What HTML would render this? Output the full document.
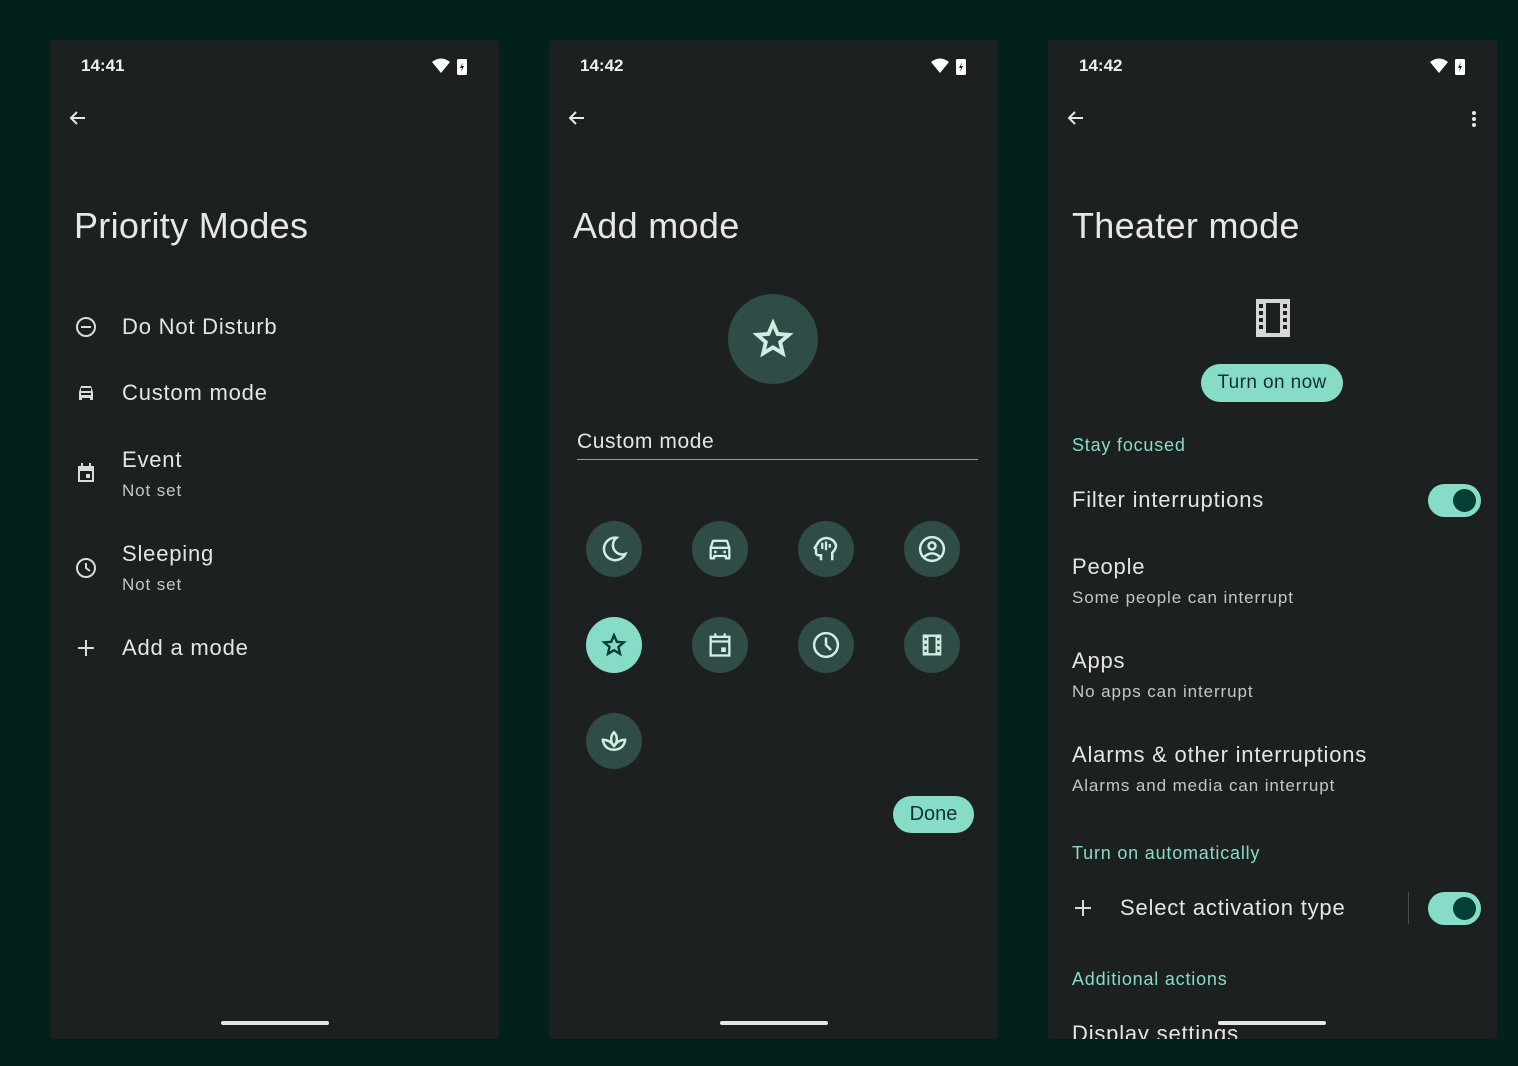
<!DOCTYPE html>
<html><head><meta charset="utf-8"><style>
*{margin:0;padding:0;box-sizing:border-box}
body{width:1518px;height:1066px;background:#02211d;position:relative;overflow:hidden;font-family:"Liberation Sans",sans-serif;color:#e3e6e4}
.p{position:absolute;top:40px;width:449px;height:999px;background:#1d2020;border-radius:3px;overflow:hidden}
.t{position:absolute;white-space:nowrap}
.time{font-size:17px;font-weight:bold;line-height:20px;top:56px;color:#eee}
.h{font-size:36px;line-height:40px;top:206px;color:#e6e8e6;letter-spacing:0.3px}
.i{font-size:22px;line-height:26px;letter-spacing:0.8px}
.s{font-size:17px;line-height:20px;color:#c2c6c4;letter-spacing:0.9px}
.a{font-size:18px;line-height:22px;color:#86dcc7;letter-spacing:0.8px}
.nav{position:absolute;top:1021px;width:108px;height:4px;border-radius:2px;background:#e6e6e6}
.c{position:absolute;width:56px;height:56px;border-radius:50%;background:#2f4c46;display:flex;align-items:center;justify-content:center}
.tg{position:absolute;width:53px;height:33px;border-radius:17px;background:#86dcc7}
.tg::after{content:"";position:absolute;right:5px;top:5px;width:23px;height:23px;border-radius:50%;background:#053f35}
svg{position:absolute}
</style></head><body>
<div class="p" style="left:50px"></div>
<div class="p" style="left:549px"></div>
<div class="p" style="left:1048px"></div>

<div class="t time" style="left:81px">14:41</div>
<div class="t time" style="left:580px">14:42</div>
<div class="t time" style="left:1079px">14:42</div>
<svg style="left:431px;top:57px" width="40" height="18" viewBox="0 0 40 18"><path d="M1 5 Q10 -2 19 5 L10 16Z" fill="#fff"/><rect x="26" y="2" width="10" height="16" rx="1.5" fill="#fff"/><path d="M32 5 L29 11 H31 L30 15 L33 9 H31Z" fill="#1d2020"/></svg>
<svg style="left:930px;top:57px" width="40" height="18" viewBox="0 0 40 18"><path d="M1 5 Q10 -2 19 5 L10 16Z" fill="#fff"/><rect x="26" y="2" width="10" height="16" rx="1.5" fill="#fff"/><path d="M32 5 L29 11 H31 L30 15 L33 9 H31Z" fill="#1d2020"/></svg>
<svg style="left:1429px;top:57px" width="40" height="18" viewBox="0 0 40 18"><path d="M1 5 Q10 -2 19 5 L10 16Z" fill="#fff"/><rect x="26" y="2" width="10" height="16" rx="1.5" fill="#fff"/><path d="M32 5 L29 11 H31 L30 15 L33 9 H31Z" fill="#1d2020"/></svg>

<svg style="left:68px;top:108px" width="20" height="20" viewBox="0 0 20 20"><path d="M17 10H3M9 4L3 10L9 16" stroke="#e6e6e6" stroke-width="2" fill="none"/></svg>
<svg style="left:567px;top:108px" width="20" height="20" viewBox="0 0 20 20"><path d="M17 10H3M9 4L3 10L9 16" stroke="#e6e6e6" stroke-width="2" fill="none"/></svg>
<svg style="left:1066px;top:108px" width="20" height="20" viewBox="0 0 20 20"><path d="M17 10H3M9 4L3 10L9 16" stroke="#e6e6e6" stroke-width="2" fill="none"/></svg>
<svg style="left:1470px;top:110px" width="8" height="18" viewBox="0 0 8 18"><circle cx="4" cy="3" r="2" fill="#e6e6e6"/><circle cx="4" cy="9" r="2" fill="#e6e6e6"/><circle cx="4" cy="15" r="2" fill="#e6e6e6"/></svg>

<!-- Panel 1 -->
<div class="t h" style="left:74px">Priority Modes</div>
<svg style="left:75px;top:316px" width="22" height="22" viewBox="0 0 22 22"><circle cx="11" cy="11" r="9" stroke="#d8dcda" stroke-width="2" fill="none"/><path d="M6 11H16" stroke="#d8dcda" stroke-width="2"/></svg>
<div class="t i" style="left:122px;top:314px">Do Not Disturb</div>
<svg style="left:76px;top:384px" width="20" height="18" viewBox="0 0 20 18"><path d="M3 8L5 2H15L17 8V16H14V14H6V16H3Z" fill="#d8dcda"/><rect x="5" y="9" width="10" height="2" fill="#1d2020"/><rect x="5" y="4" width="10" height="3" fill="#1d2020"/></svg>
<div class="t i" style="left:122px;top:380px">Custom mode</div>
<svg style="left:76px;top:462px" width="20" height="22" viewBox="0 0 20 22"><rect x="2" y="4" width="16" height="16" fill="#d8dcda"/><rect x="4" y="9" width="12" height="9" fill="#1d2020"/><rect x="10" y="12" width="4" height="4" fill="#d8dcda"/><rect x="5" y="1" width="2" height="4" fill="#d8dcda"/><rect x="13" y="1" width="2" height="4" fill="#d8dcda"/></svg>
<div class="t i" style="left:122px;top:447px">Event</div>
<div class="t s" style="left:122px;top:481px">Not set</div>
<svg style="left:75px;top:557px" width="22" height="22" viewBox="0 0 22 22"><circle cx="11" cy="11" r="9" stroke="#d8dcda" stroke-width="2" fill="none"/><path d="M11 6V11L15 14" stroke="#d8dcda" stroke-width="2" fill="none"/></svg>
<div class="t i" style="left:122px;top:541px">Sleeping</div>
<div class="t s" style="left:122px;top:575px">Not set</div>
<svg style="left:77px;top:639px" width="18" height="18" viewBox="0 0 18 18"><path d="M9 1V17M1 9H17" stroke="#d8dcda" stroke-width="2"/></svg>
<div class="t i" style="left:122px;top:635px">Add a mode</div>
<div class="nav" style="left:221px"></div>

<!-- Panel 2 -->
<div class="t h" style="left:573px">Add mode</div>
<div class="c" style="left:728px;top:294px;width:90px;height:90px"><svg style="position:static" width="42" height="42" viewBox="0 0 24 24"><path d="M12 3L14.6 9.1L21 9.6L16.1 13.8L17.6 20.2L12 16.8L6.4 20.2L7.9 13.8L3 9.6L9.4 9.1Z" stroke="#d0eee6" stroke-width="2.2" fill="none" stroke-linejoin="miter"/></svg></div>
<div class="t" style="left:577px;top:430px;font-size:21px;line-height:24px;color:#e3e6e4;letter-spacing:0.6px">Custom mode</div>
<div style="position:absolute;left:577px;top:459px;width:401px;height:1px;background:#9aa09e"></div>

<div class="c" style="left:586px;top:521px"><svg style="position:static" width="30" height="30" viewBox="0 0 24 24"><path d="M14 3A9 9 0 1 0 21 16A7.5 7.5 0 0 1 14 3Z" stroke="#d0eee6" stroke-width="2" fill="none"/></svg></div>
<div class="c" style="left:692px;top:521px"><svg style="position:static" width="28" height="28" viewBox="0 0 24 24"><path d="M4 11L6 5H18L20 11V20H17V18H7V20H4Z" stroke="#d0eee6" stroke-width="2" fill="none" stroke-linejoin="round"/><path d="M4 11H20" stroke="#d0eee6" stroke-width="2"/><circle cx="8" cy="14.5" r="1.2" fill="#d0eee6"/><circle cx="16" cy="14.5" r="1.2" fill="#d0eee6"/></svg></div>
<div class="c" style="left:798px;top:521px"><svg style="position:static" width="30" height="30" viewBox="0 0 24 24"><path d="M8 21V17H6A2 2 0 0 1 4 15V12L3 11L5 8A8 8 0 0 1 20 9C20 12 18 14 17 15V21" stroke="#d0eee6" stroke-width="2" fill="none"/><path d="M9 7V12M12 6V13M15 8V11" stroke="#d0eee6" stroke-width="1.8"/></svg></div>
<div class="c" style="left:904px;top:521px"><svg style="position:static" width="30" height="30" viewBox="0 0 24 24"><circle cx="12" cy="12" r="9.5" stroke="#d0eee6" stroke-width="2" fill="none"/><circle cx="12" cy="9.5" r="2.8" stroke="#d0eee6" stroke-width="2" fill="none"/><path d="M6 18Q12 13 18 18" stroke="#d0eee6" stroke-width="2" fill="none"/></svg></div>

<div class="c" style="left:586px;top:617px;background:#86dcc7"><svg style="position:static" width="26" height="26" viewBox="0 0 24 24"><path d="M12 3L14.6 9.1L21 9.6L16.1 13.8L17.6 20.2L12 16.8L6.4 20.2L7.9 13.8L3 9.6L9.4 9.1Z" stroke="#053f35" stroke-width="2.2" fill="none"/></svg></div>
<div class="c" style="left:692px;top:617px"><svg style="position:static" width="28" height="28" viewBox="0 0 24 24"><rect x="4" y="5" width="16" height="16" stroke="#d0eee6" stroke-width="2" fill="none"/><path d="M4 9H20M8 2V6M16 2V6" stroke="#d0eee6" stroke-width="2"/><rect x="13" y="14" width="4" height="4" fill="#d0eee6"/></svg></div>
<div class="c" style="left:798px;top:617px"><svg style="position:static" width="30" height="30" viewBox="0 0 24 24"><circle cx="12" cy="12" r="9.5" stroke="#d0eee6" stroke-width="2" fill="none"/><path d="M12 6V12L16 16" stroke="#d0eee6" stroke-width="2" fill="none"/></svg></div>
<div class="c" style="left:904px;top:617px"><svg style="position:static" width="28" height="28" viewBox="0 0 24 24"><path d="M4 3H20V21H4Z" fill="#d0eee6"/><rect x="9" y="5" width="6" height="14" fill="#2f4c46"/><rect x="5.5" y="6" width="2" height="2" fill="#2f4c46"/><rect x="5.5" y="11" width="2" height="2" fill="#2f4c46"/><rect x="5.5" y="16" width="2" height="2" fill="#2f4c46"/><rect x="16.5" y="6" width="2" height="2" fill="#2f4c46"/><rect x="16.5" y="11" width="2" height="2" fill="#2f4c46"/><rect x="16.5" y="16" width="2" height="2" fill="#2f4c46"/></svg></div>

<div class="c" style="left:586px;top:713px"><svg style="position:static" width="30" height="30" viewBox="0 0 24 24"><path d="M12 19C8 19 4 17 3 11C7 11 10 13 12 16C14 13 17 11 21 11C20 17 16 19 12 19Z" stroke="#d0eee6" stroke-width="2" fill="none" stroke-linejoin="round"/><path d="M12 16C9 13 9 8 12 5C15 8 15 13 12 16Z" stroke="#d0eee6" stroke-width="2" fill="none"/></svg></div>

<div class="t" style="left:893px;top:796px;width:81px;height:37px;border-radius:19px;background:#86dcc7;color:#10312b;font-size:20px;line-height:37px;text-align:center">Done</div>
<div class="nav" style="left:720px"></div>

<!-- Panel 3 -->
<div class="t h" style="left:1072px">Theater mode</div>
<svg style="left:1256px;top:299px" width="34" height="38" viewBox="0 0 34 38"><rect x="0" y="0" width="34" height="38" fill="#d6d8d6"/><rect x="10" y="4" width="14" height="30" fill="#1d2020"/><rect x="3" y="5" width="4" height="4" fill="#1d2020"/><rect x="3" y="12" width="4" height="4" fill="#1d2020"/><rect x="3" y="19" width="4" height="4" fill="#1d2020"/><rect x="3" y="26" width="4" height="4" fill="#1d2020"/><rect x="27" y="5" width="4" height="4" fill="#1d2020"/><rect x="27" y="12" width="4" height="4" fill="#1d2020"/><rect x="27" y="19" width="4" height="4" fill="#1d2020"/><rect x="27" y="26" width="4" height="4" fill="#1d2020"/></svg>
<div class="t" style="left:1201px;top:364px;width:142px;height:38px;border-radius:19px;background:#86dcc7;color:#10312b;font-size:19px;line-height:38px;text-align:center;letter-spacing:0.4px">Turn on now</div>
<div class="t a" style="left:1072px;top:434px">Stay focused</div>
<div class="t i" style="left:1072px;top:487px">Filter interruptions</div>
<div class="tg" style="left:1428px;top:484px"></div>
<div class="t i" style="left:1072px;top:554px">People</div>
<div class="t s" style="left:1072px;top:588px">Some people can interrupt</div>
<div class="t i" style="left:1072px;top:648px">Apps</div>
<div class="t s" style="left:1072px;top:682px">No apps can interrupt</div>
<div class="t i" style="left:1072px;top:742px">Alarms &amp; other interruptions</div>
<div class="t s" style="left:1072px;top:776px">Alarms and media can interrupt</div>
<div class="t a" style="left:1072px;top:842px">Turn on automatically</div>
<svg style="left:1074px;top:899px" width="18" height="18" viewBox="0 0 18 18"><path d="M9 1V17M1 9H17" stroke="#d8dcda" stroke-width="2"/></svg>
<div class="t i" style="left:1120px;top:895px">Select activation type</div>
<div style="position:absolute;left:1408px;top:892px;width:1px;height:32px;background:#4a4f4d"></div>
<div class="tg" style="left:1428px;top:892px"></div>
<div class="t a" style="left:1072px;top:968px">Additional actions</div>
<div style="position:absolute;left:1048px;top:1018px;width:449px;height:21px;overflow:hidden"><div class="t i" style="left:24px;top:3px">Display settings</div></div>
<div class="nav" style="left:1218px"></div>
</body></html>
